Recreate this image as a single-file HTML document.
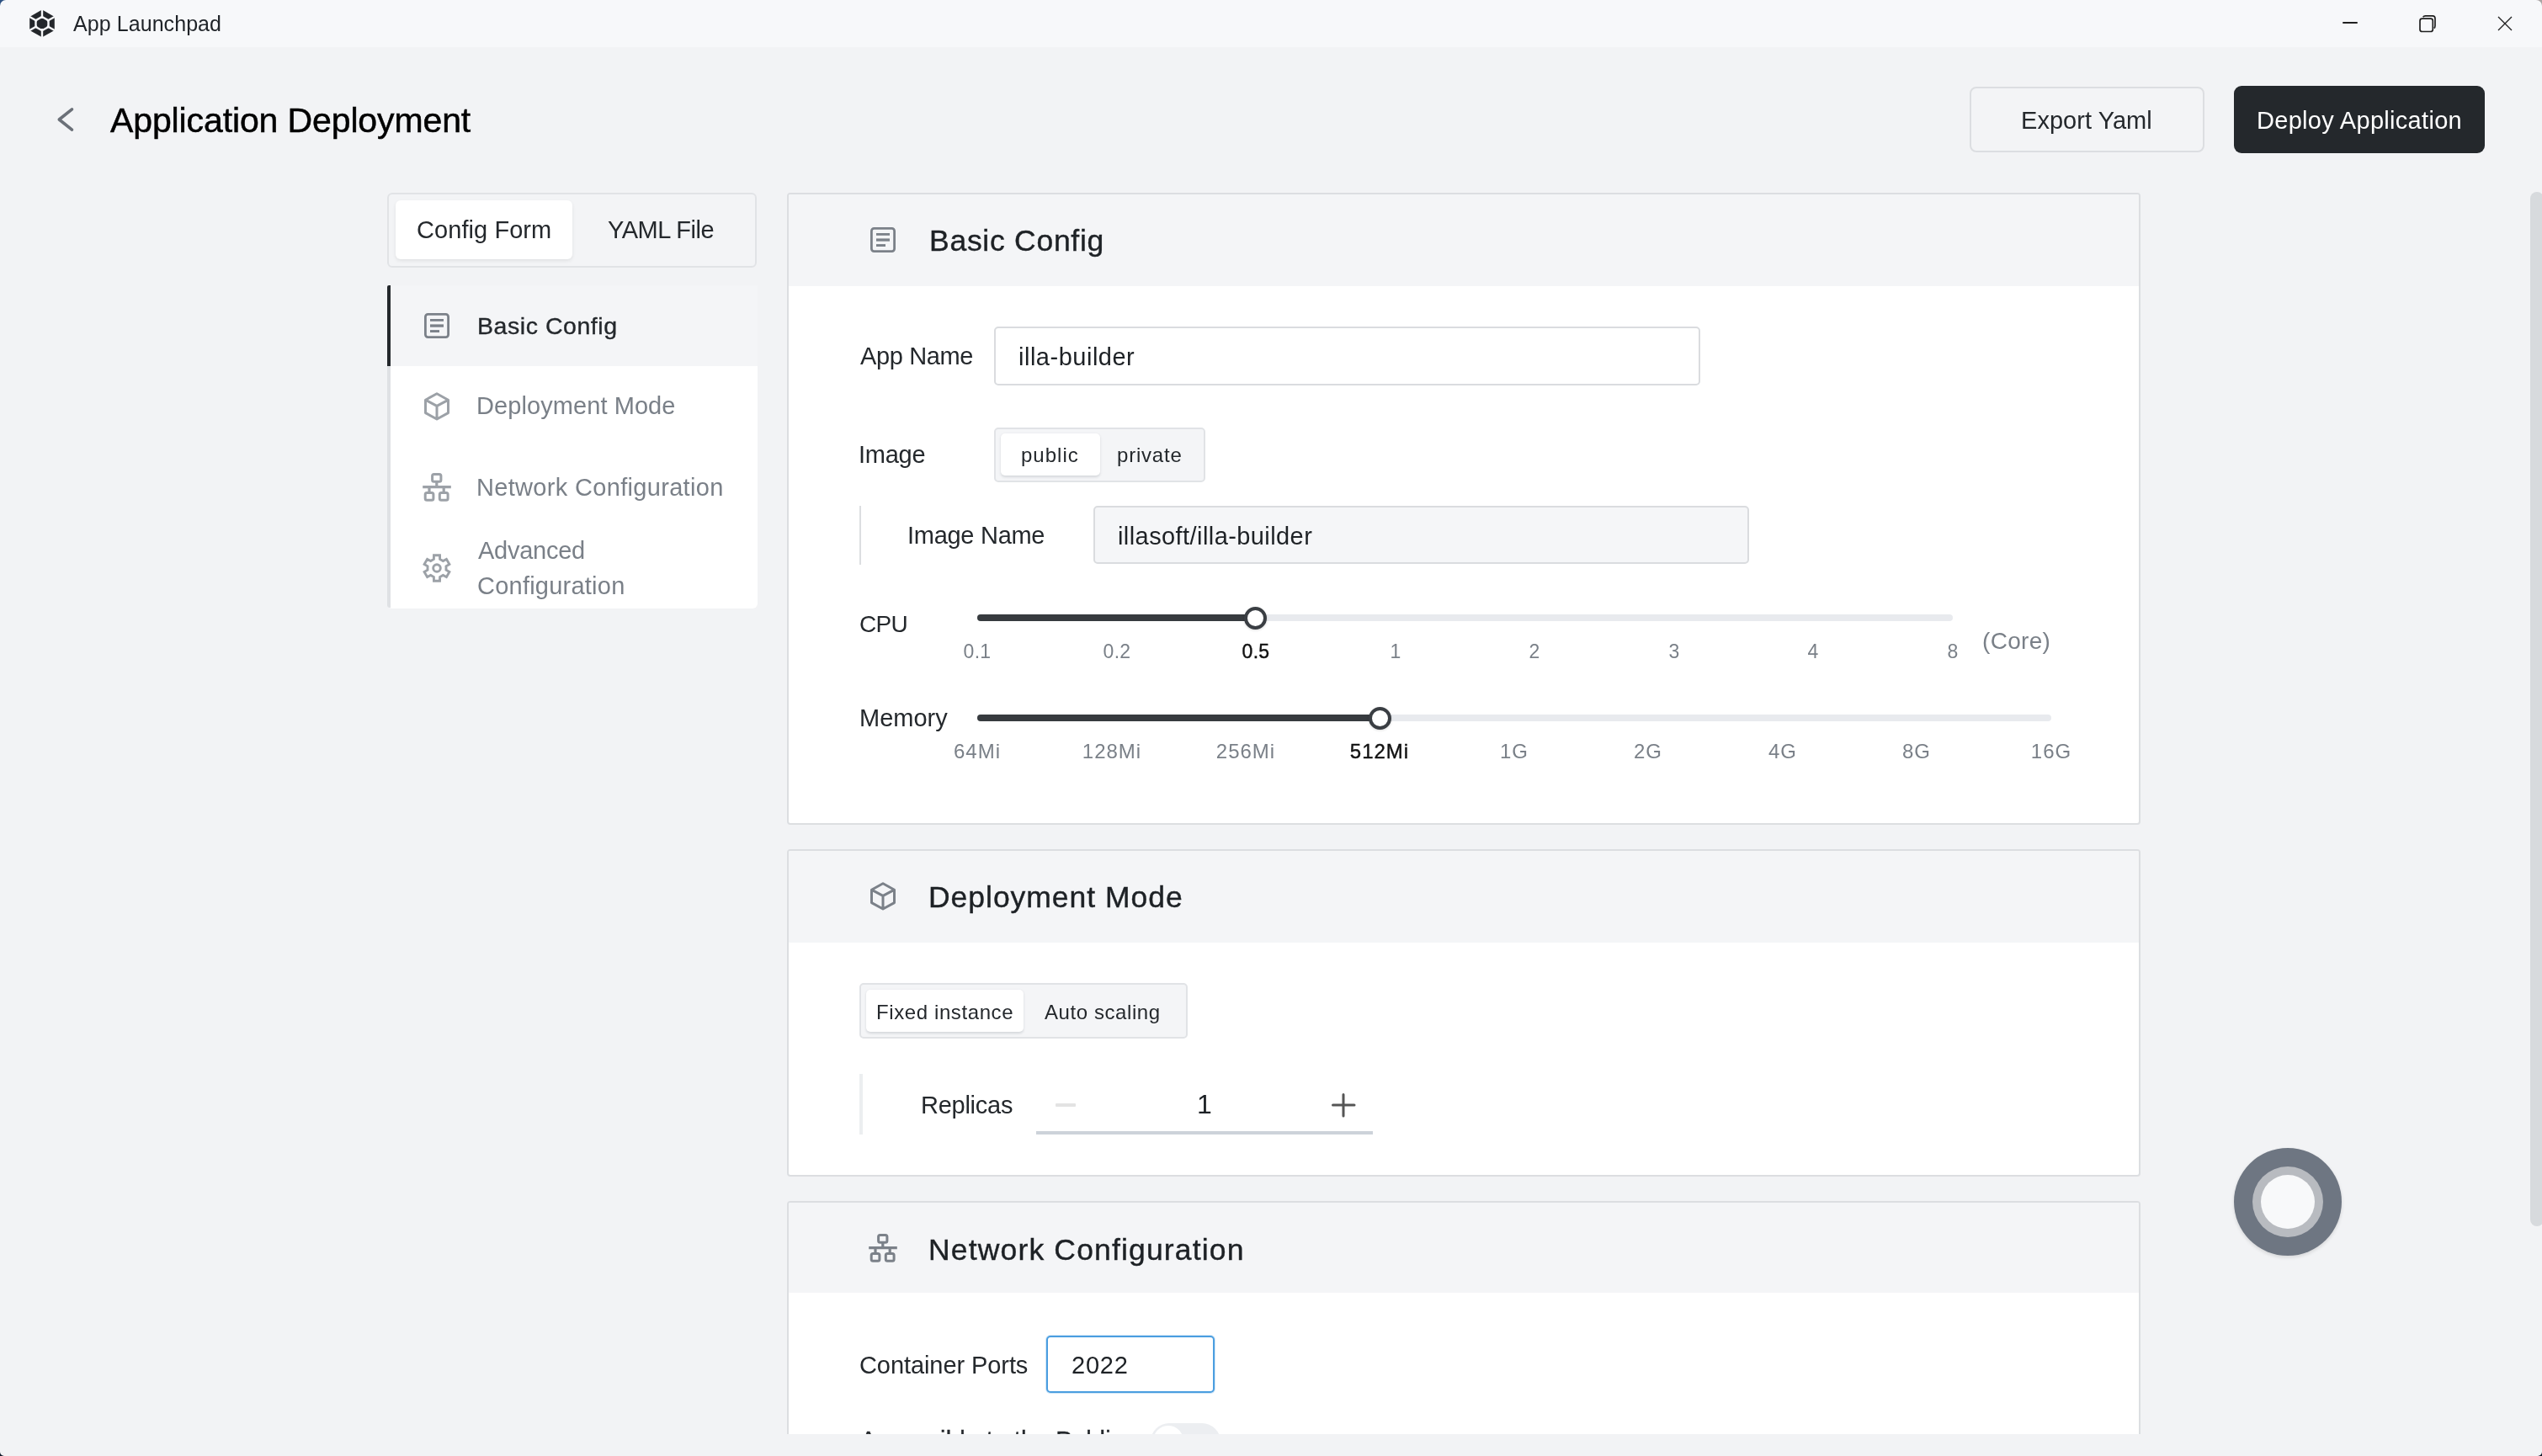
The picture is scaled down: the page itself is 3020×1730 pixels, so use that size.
<!DOCTYPE html>
<html><head><meta charset="utf-8"><title>App Launchpad</title>
<style>
html,body{margin:0;padding:0;width:3020px;height:1730px;overflow:hidden;background:#f2f3f5;}
body{position:relative;font-family:"Liberation Sans",sans-serif;}
.t{position:absolute;white-space:nowrap;font-family:"Liberation Sans",sans-serif;will-change:transform;}
.r{position:absolute;box-sizing:content-box;}
</style></head><body>
<div class="r" style="left:0px;top:0px;width:3020px;height:1730px;background:#f2f3f5"></div>
<div class="r" style="left:0px;top:0px;width:3020px;height:56px;background:#f7f8fa"></div>
<svg class="r" style="left:35px;top:11px" width="30" height="34" viewBox="35 11 30 34">
<polygon points="50,11.6 64.8,20 64.8,36 50,44.2 35.2,36 35.2,20" fill="#24272b"/>
<g stroke="#f7f8fa" stroke-width="2.4">
<line x1="50" y1="10" x2="50" y2="22"/><line x1="50" y1="34" x2="50" y2="46"/>
<line x1="66" y1="19.3" x2="56" y2="25"/><line x1="34" y1="19.3" x2="44" y2="25"/>
<line x1="66" y1="36.7" x2="56" y2="31"/><line x1="34" y1="36.7" x2="44" y2="31"/>
</g>
<polygon points="50,20 57.5,24.2 57.5,32 50,36.2 42.5,32 42.5,24.2" fill="none" stroke="#f7f8fa" stroke-width="2.4"/>
</svg>
<div class="t" style="left:86.7px;top:16.0px;font-size:25px;line-height:25px;color:#1f2328;font-weight:400;letter-spacing:0.07px;">App Launchpad</div>
<div class="r" style="left:2783px;top:26.4px;width:18px;height:2.0px;background:#1f1f1f;border-radius:1px"></div>
<svg class="r" style="left:2868px;top:12px" width="32" height="32" viewBox="2868 12 32 32">
<path d="M2878.6,20.2 Q2879.6,18.9 2881.6,18.9 L2890.0,18.9 Q2893.0,18.9 2893.0,22.0 L2893.0,30.6 Q2893.0,32.6 2891.8,33.6" fill="none" stroke="#1f1f1f" stroke-width="1.7"/>
<rect x="2875" y="22.2" width="15.3" height="15.3" rx="2.6" fill="none" stroke="#1f1f1f" stroke-width="1.7"/>
</svg>
<svg class="r" style="left:2960px;top:12px" width="32" height="32" viewBox="2960 12 32 32">
<path d="M2968,20 L2984,36 M2984,20 L2968,36" stroke="#1f1f1f" stroke-width="1.3"/>
</svg>
<svg class="r" style="left:60px;top:120px" width="36" height="44" viewBox="60 120 36 44">
<polyline points="85.5,129.8 70.3,142 85.5,154.2" fill="none" stroke="#6b7078" stroke-width="3.6" stroke-linecap="round" stroke-linejoin="round"/>
</svg>
<div class="t" style="left:130.6px;top:122.6px;font-size:41px;line-height:41px;color:#000;font-weight:400;letter-spacing:-0.12px;-webkit-text-stroke:0.5px #000">Application Deployment</div>
<div class="r" style="left:2340px;top:103px;width:275px;height:74px;border:2px solid #dcdee1;border-radius:8px;background:#f3f4f6"></div>
<div class="t" style="left:2400.5px;top:129.0px;font-size:29px;line-height:29px;color:#24282c;font-weight:400;letter-spacing:0.05px;">Export Yaml</div>
<div class="r" style="left:2654px;top:102px;width:298px;height:80px;background:#24282c;border-radius:9px"></div>
<div class="t" style="left:2681.0px;top:129.0px;font-size:29px;line-height:29px;color:#fff;font-weight:400;letter-spacing:0.3px;">Deploy Application</div>
<div class="r" style="left:460px;top:228.5px;width:435px;height:85px;border:2px solid #e1e3e6;border-radius:6px;background:#f3f4f6"></div>
<div class="r" style="left:470px;top:238px;width:210px;height:70px;background:#fff;border-radius:6px;box-shadow:0 2px 4px rgba(0,0,0,0.08)"></div>
<div class="t" style="left:495.0px;top:258.9px;font-size:29px;line-height:29px;color:#24282c;font-weight:400;letter-spacing:0.07px;">Config Form</div>
<div class="t" style="left:721.7px;top:258.9px;font-size:29px;line-height:29px;color:#24282c;font-weight:400;letter-spacing:-0.5px;">YAML File</div>
<div class="r" style="left:460px;top:339px;width:440px;height:96px;background:#f4f5f7"></div>
<div class="r" style="left:460px;top:339px;width:4px;height:96px;background:#24282c;border-radius:2px 0 0 0"></div>
<div class="r" style="left:460px;top:435px;width:440px;height:288px;background:#fff;border-radius:0 0 6px 6px"></div>
<div class="r" style="left:460px;top:435px;width:4px;height:287px;background:#dfe1e4;border-radius:0 0 0 3px"></div>
<svg class="r" style="left:504px;top:372px" width="30" height="30" viewBox="0 0 30 30">
<rect x="1.4" y="1.4" width="27.2" height="27.2" rx="3" fill="none" stroke="#7b8189" stroke-width="2.8"/>
<rect x="7" y="7" width="16" height="2.8" fill="#7b8189"/><rect x="7" y="13.4" width="16" height="3.3" fill="#7b8189"/><rect x="7" y="20.1" width="11" height="2.9" fill="#7b8189"/>
</svg>
<div class="t" style="left:566.9px;top:373.2px;font-size:28.5px;line-height:28.5px;color:#24282c;font-weight:400;letter-spacing:0.55px;-webkit-text-stroke:0.35px #24282c">Basic Config</div>
<svg class="r" style="left:504px;top:466px" width="30" height="34" viewBox="0 0 30 34">
<path d="M15,1.8 L28.5,9.2 L28.5,24.6 L15,32 L1.5,24.6 L1.5,9.2 Z M1.8,9.4 L15,16.4 L28.2,9.4 M15,16.4 L15,31.6" fill="none" stroke="#9ca1a7" stroke-width="3" stroke-linejoin="round"/>
</svg>
<div class="t" style="left:566.0px;top:468.4px;font-size:29px;line-height:29px;color:#7a8088;font-weight:400;letter-spacing:0.08px;">Deployment Mode</div>
<svg class="r" style="left:502px;top:562px" width="34" height="34" viewBox="0 0 34 34">
<rect x="11.6" y="1.6" width="10.3" height="8.6" rx="2" fill="none" stroke="#9ca1a7" stroke-width="3"/>
<rect x="3.2" y="23.6" width="9.7" height="8.7" rx="2" fill="none" stroke="#9ca1a7" stroke-width="3"/>
<rect x="20.3" y="23.6" width="9.8" height="8.7" rx="2" fill="none" stroke="#9ca1a7" stroke-width="3"/>
<path d="M16.8,10 L16.8,16.5 M0.2,16.6 L33.8,16.6 M8,16.5 L8,23.8 M25.2,16.5 L25.2,23.8" fill="none" stroke="#9ca1a7" stroke-width="3.2"/>
</svg>
<div class="t" style="left:566.0px;top:564.9px;font-size:29px;line-height:29px;color:#7a8088;font-weight:400;letter-spacing:0.32px;">Network Configuration</div>
<svg class="r" style="left:502px;top:658px" width="34" height="34" viewBox="0 0 34 34">
<polygon points="13.35,6.41 13.49,1.80 20.51,1.80 20.65,6.41 24.35,8.55 28.41,6.36 31.92,12.44 27.99,14.86 27.99,19.14 31.92,21.56 28.41,27.64 24.35,25.45 20.65,27.59 20.51,32.20 13.49,32.20 13.35,27.59 9.65,25.45 5.59,27.64 2.08,21.56 6.01,19.14 6.01,14.86 2.08,12.44 5.59,6.36 9.65,8.55" fill="none" stroke="#9ca1a7" stroke-width="2.9" stroke-linejoin="miter"/>
<circle cx="17" cy="17" r="4.3" fill="none" stroke="#9ca1a7" stroke-width="2.9"/>
</svg>
<div class="t" style="left:567.7px;top:639.9px;font-size:29px;line-height:29px;color:#7a8088;font-weight:400;letter-spacing:-0.25px;">Advanced</div>
<div class="t" style="left:566.8px;top:681.6px;font-size:29px;line-height:29px;color:#7a8088;font-weight:400;letter-spacing:0.23px;">Configuration</div>
<div class="r" style="left:935px;top:228.5px;width:1604px;height:747.5px;border:2px solid #dcdee1;border-radius:4px;background:#fff;overflow:hidden"><div style="height:109px;background:#f4f5f7"></div></div>
<svg class="r" style="left:1034px;top:270px" width="30" height="30" viewBox="0 0 30 30">
<rect x="1.4" y="1.4" width="27.2" height="27.2" rx="3" fill="none" stroke="#7b8189" stroke-width="2.8"/>
<rect x="7" y="7" width="16" height="2.8" fill="#7b8189"/><rect x="7" y="13.4" width="16" height="3.3" fill="#7b8189"/><rect x="7" y="20.1" width="11" height="2.9" fill="#7b8189"/>
</svg>
<div class="t" style="left:1104.1px;top:268.7px;font-size:35.5px;line-height:35.5px;color:#1d2125;font-weight:400;letter-spacing:0.73px;-webkit-text-stroke:0.4px #1d2125">Basic Config</div>
<div class="t" style="left:1021.7px;top:409.3px;font-size:29px;line-height:29px;color:#24282c;font-weight:400;letter-spacing:-0.36px;">App Name</div>
<div class="r" style="left:1180.5px;top:388px;width:835.5px;height:65.5px;border:2px solid #dadcdf;border-radius:5px;background:#fff"></div>
<div class="t" style="left:1210.1px;top:409.9px;font-size:29px;line-height:29px;color:#1d2125;font-weight:400;letter-spacing:0.51px;">illa-builder</div>
<div class="t" style="left:1020.4px;top:525.7px;font-size:29px;line-height:29px;color:#24282c;font-weight:400;letter-spacing:-0.27px;">Image</div>
<div class="r" style="left:1180.5px;top:507.5px;width:247.5px;height:61px;border:2px solid #e1e3e6;border-radius:5px;background:#f4f5f7"></div>
<div class="r" style="left:1189px;top:515px;width:118px;height:50px;background:#fff;border-radius:5px;box-shadow:0 1.5px 3px rgba(30,40,60,0.14)"></div>
<div class="t" style="left:1212.5px;top:529.4px;font-size:24px;line-height:24px;color:#24282c;font-weight:400;letter-spacing:1.0px;">public</div>
<div class="t" style="left:1326.7px;top:529.4px;font-size:24px;line-height:24px;color:#24282c;font-weight:400;letter-spacing:0.8px;">private</div>
<div class="r" style="left:1021px;top:601px;width:2px;height:70px;background:#dcdee1"></div>
<div class="t" style="left:1078.1px;top:622.1px;font-size:29px;line-height:29px;color:#24282c;font-weight:400;letter-spacing:-0.28px;">Image Name</div>
<div class="r" style="left:1298.5px;top:601.2px;width:775.5px;height:64.8px;border:2px solid #dadcdf;border-radius:5px;background:#f5f6f8"></div>
<div class="t" style="left:1328.4px;top:622.9px;font-size:29px;line-height:29px;color:#1d2125;font-weight:400;letter-spacing:0.42px;">illasoft/illa-builder</div>
<div class="t" style="left:1021.1px;top:727.6px;font-size:28px;line-height:28px;color:#24282c;font-weight:400;letter-spacing:-0.75px;">CPU</div>
<div class="r" style="left:1161px;top:730px;width:1159px;height:8px;background:#e8eaee;border-radius:4px"></div>
<div class="r" style="left:1161px;top:730px;width:331px;height:8px;background:#373b3f;border-radius:4px"></div>
<div class="r" style="left:1478px;top:720.5px;width:19px;height:19px;border:4px solid #3a3e43;border-radius:50%;background:#fff;box-shadow:0 1px 3px rgba(0,0,0,0.15)"></div>
<div class="t" style="left:1101.0px;width:120px;text-align:center;top:762.5px;font-size:23px;line-height:23px;letter-spacing:0.3px;color:#7a8088;">0.1</div>
<div class="t" style="left:1266.5px;width:120px;text-align:center;top:762.5px;font-size:23px;line-height:23px;letter-spacing:0.3px;color:#7a8088;">0.2</div>
<div class="t" style="left:1432.0px;width:120px;text-align:center;top:762.5px;font-size:23px;line-height:23px;letter-spacing:0.3px;color:#111;-webkit-text-stroke:0.4px #111;">0.5</div>
<div class="t" style="left:1597.5px;width:120px;text-align:center;top:762.5px;font-size:23px;line-height:23px;letter-spacing:0.3px;color:#7a8088;">1</div>
<div class="t" style="left:1763.1px;width:120px;text-align:center;top:762.5px;font-size:23px;line-height:23px;letter-spacing:0.3px;color:#7a8088;">2</div>
<div class="t" style="left:1928.6px;width:120px;text-align:center;top:762.5px;font-size:23px;line-height:23px;letter-spacing:0.3px;color:#7a8088;">3</div>
<div class="t" style="left:2094.1px;width:120px;text-align:center;top:762.5px;font-size:23px;line-height:23px;letter-spacing:0.3px;color:#7a8088;">4</div>
<div class="t" style="left:2259.6px;width:120px;text-align:center;top:762.5px;font-size:23px;line-height:23px;letter-spacing:0.3px;color:#7a8088;">8</div>
<div class="t" style="left:2355.0px;top:747.8px;font-size:28px;line-height:28px;color:#7a8088;font-weight:400;letter-spacing:0.32px;">(Core)</div>
<div class="t" style="left:1021.0px;top:838.8px;font-size:29px;line-height:29px;color:#24282c;font-weight:400;">Memory</div>
<div class="r" style="left:1161px;top:849px;width:1276px;height:8px;background:#e8eaee;border-radius:4px"></div>
<div class="r" style="left:1161px;top:849px;width:478px;height:8px;background:#373b3f;border-radius:4px"></div>
<div class="r" style="left:1625.5px;top:839.5px;width:19px;height:19px;border:4px solid #3a3e43;border-radius:50%;background:#fff;box-shadow:0 1px 3px rgba(0,0,0,0.15)"></div>
<div class="t" style="left:1081.0px;width:160px;text-align:center;top:880.7px;font-size:24px;line-height:24px;letter-spacing:1px;color:#7a8088;">64Mi</div>
<div class="t" style="left:1240.5px;width:160px;text-align:center;top:880.7px;font-size:24px;line-height:24px;letter-spacing:1px;color:#7a8088;">128Mi</div>
<div class="t" style="left:1400.0px;width:160px;text-align:center;top:880.7px;font-size:24px;line-height:24px;letter-spacing:1px;color:#7a8088;">256Mi</div>
<div class="t" style="left:1559.4px;width:160px;text-align:center;top:880.7px;font-size:24px;line-height:24px;letter-spacing:1px;color:#111;-webkit-text-stroke:0.4px #111;">512Mi</div>
<div class="t" style="left:1718.9px;width:160px;text-align:center;top:880.7px;font-size:24px;line-height:24px;letter-spacing:1px;color:#7a8088;">1G</div>
<div class="t" style="left:1878.4px;width:160px;text-align:center;top:880.7px;font-size:24px;line-height:24px;letter-spacing:1px;color:#7a8088;">2G</div>
<div class="t" style="left:2037.9px;width:160px;text-align:center;top:880.7px;font-size:24px;line-height:24px;letter-spacing:1px;color:#7a8088;">4G</div>
<div class="t" style="left:2197.3px;width:160px;text-align:center;top:880.7px;font-size:24px;line-height:24px;letter-spacing:1px;color:#7a8088;">8G</div>
<div class="t" style="left:2356.8px;width:160px;text-align:center;top:880.7px;font-size:24px;line-height:24px;letter-spacing:1px;color:#7a8088;">16G</div>
<div class="r" style="left:935px;top:1008.5px;width:1604px;height:385.0px;border:2px solid #dcdee1;border-radius:4px;background:#fff;overflow:hidden"><div style="height:109px;background:#f4f5f7"></div></div>
<svg class="r" style="left:1034px;top:1048px" width="30" height="34" viewBox="0 0 30 34">
<path d="M15,1.8 L28.5,9.2 L28.5,24.6 L15,32 L1.5,24.6 L1.5,9.2 Z M1.8,9.4 L15,16.4 L28.2,9.4 M15,16.4 L15,31.6" fill="none" stroke="#7b8189" stroke-width="3" stroke-linejoin="round"/>
</svg>
<div class="t" style="left:1103.0px;top:1049.4px;font-size:35.5px;line-height:35.5px;color:#1d2125;font-weight:400;letter-spacing:0.97px;-webkit-text-stroke:0.4px #1d2125">Deployment Mode</div>
<div class="r" style="left:1021px;top:1168.3px;width:386px;height:62px;border:2px solid #e1e3e6;border-radius:5px;background:#f4f5f7"></div>
<div class="r" style="left:1029px;top:1176.3px;width:187px;height:49.5px;background:#fff;border-radius:5px;box-shadow:0 1.5px 3px rgba(30,40,60,0.14)"></div>
<div class="t" style="left:1040.9px;top:1190.5px;font-size:24px;line-height:24px;color:#24282c;font-weight:400;letter-spacing:0.6px;">Fixed instance</div>
<div class="t" style="left:1240.8px;top:1190.5px;font-size:24px;line-height:24px;color:#24282c;font-weight:400;letter-spacing:0.58px;">Auto scaling</div>
<div class="r" style="left:1021px;top:1276px;width:4px;height:72px;background:#eceef0"></div>
<div class="t" style="left:1094.2px;top:1298.9px;font-size:29px;line-height:29px;color:#24282c;font-weight:400;letter-spacing:-0.26px;">Replicas</div>
<div class="r" style="left:1254px;top:1311px;width:23.59999999999991px;height:4px;background:#e3e3e3;border-radius:1px"></div>
<div class="t" style="left:1421.5px;top:1296.4px;font-size:32px;line-height:32px;color:#1d2125;font-weight:400;">1</div>
<svg class="r" style="left:1578px;top:1296px" width="36" height="34" viewBox="1578 1296 36 34">
<path d="M1596,1300.5 L1596,1326 M1583.5,1313 L1609,1313" stroke="#555" stroke-width="3" stroke-linecap="round"/>
</svg>
<div class="r" style="left:1231px;top:1343.6px;width:400px;height:4.400000000000091px;background:#cdd3da"></div>
<div class="r" style="left:0px;top:0px;width:3020px;height:1703.5px;overflow:hidden;pointer-events:none">
<div class="r" style="left:935px;top:1426.5px;width:1604px;height:600px;border:2px solid #dcdee1;border-radius:4px;background:#fff;overflow:hidden"><div style="height:107.5px;background:#f4f5f7"></div></div>
</div>
<div class="r" style="left:0;top:0;width:3020px;height:1703.5px;overflow:hidden">
<svg class="r" style="left:1032px;top:1466px" width="34" height="34" viewBox="0 0 34 34">
<rect x="11.6" y="1.6" width="10.3" height="8.6" rx="2" fill="none" stroke="#7b8189" stroke-width="3"/>
<rect x="3.2" y="23.6" width="9.7" height="8.7" rx="2" fill="none" stroke="#7b8189" stroke-width="3"/>
<rect x="20.3" y="23.6" width="9.8" height="8.7" rx="2" fill="none" stroke="#7b8189" stroke-width="3"/>
<path d="M16.8,10 L16.8,16.5 M0.2,16.6 L33.8,16.6 M8,16.5 L8,23.8 M25.2,16.5 L25.2,23.8" fill="none" stroke="#7b8189" stroke-width="3.2"/>
</svg>
<div class="t" style="left:1103.0px;top:1467.9px;font-size:35.5px;line-height:35.5px;color:#1d2125;font-weight:400;letter-spacing:1.16px;-webkit-text-stroke:0.4px #1d2125">Network Configuration</div>
<div class="t" style="left:1020.8px;top:1607.5px;font-size:29px;line-height:29px;color:#24282c;font-weight:400;letter-spacing:-0.08px;">Container Ports</div>
<div class="r" style="left:1243px;top:1586.6px;width:195.5px;height:64.8px;border:2px solid #4b9ee0;border-radius:5px;background:#fff;box-shadow:0 0 0 1px rgba(75,158,224,0.25)"></div>
<div class="t" style="left:1273.3px;top:1607.9px;font-size:29px;line-height:29px;color:#1d2125;font-weight:400;letter-spacing:0.75px;">2022</div>
<div class="t" style="left:1022.0px;top:1696.9px;font-size:29px;line-height:29px;color:#24282c;font-weight:400;letter-spacing:0.27px;-webkit-text-stroke:0.4px #24282c">Accessible to the Public</div>
<div class="r" style="left:1366.8px;top:1690.5px;width:83px;height:44px;border-radius:22px;background:#eceef1"></div>
<div class="r" style="left:1370px;top:1694px;width:36px;height:36px;border-radius:50%;background:#fff"></div>
</div>
<div class="r" style="left:2654px;top:1364px;width:128px;height:128px;border-radius:50%;background:#6e7682;box-shadow:0 2px 4px rgba(0,0,0,0.12)"></div>
<div class="r" style="left:2676px;top:1386px;width:84px;height:84px;border-radius:50%;background:#b8bbc0"></div>
<div class="r" style="left:2686px;top:1396px;width:64px;height:64px;border-radius:50%;background:#f8f9fa"></div>
<div class="r" style="left:3006px;top:228px;width:16px;height:1229px;background:#d7dadd;border-radius:8px"></div>
<svg class="r" style="left:0;top:0" width="12" height="12" viewBox="0 0 12 12"><path d="M0,0 L7,0 A7,7 0 0 0 0,7 Z" fill="#2d5282"/></svg>
<svg class="r" style="left:3008px;top:0" width="12" height="12" viewBox="0 0 12 12"><path d="M12,0 L5,0 A7,7 0 0 1 12,7 Z" fill="#a9a4a3"/></svg>
<svg class="r" style="left:3008px;top:1718px" width="12" height="12" viewBox="0 0 12 12"><path d="M12,12 L7,12 A5,5 0 0 0 12,7 Z" fill="#0f1b2b"/></svg>
<svg class="r" style="left:0;top:1718px" width="12" height="12" viewBox="0 0 12 12"><path d="M0,12 L5,12 A5,5 0 0 1 0,7 Z" fill="#0f1b2b"/></svg>
</body></html>
